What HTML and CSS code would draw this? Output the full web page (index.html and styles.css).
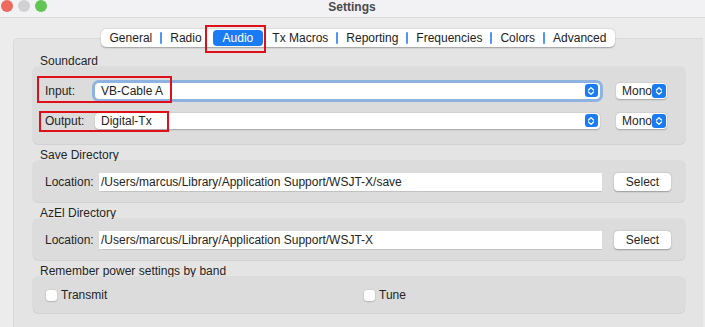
FILE: index.html
```html
<!DOCTYPE html>
<html lang="en">
<head>
  <meta charset="UTF-8">
  <meta name="viewport" content="width=device-width, initial-scale=1.0">
  <title>Settings</title>
  <link rel="stylesheet" href="styles.css">
</head>
<body>
  <div class="titlebar">
    <div class="lights">
      <span class="light light-close"></span>
      <span class="light light-min"></span>
      <span class="light light-max"></span>
    </div>
    <div class="title">Settings</div>
  </div>

  <div class="window">
    <nav class="tabs-row">
      <div class="tabs">
        <span class="tab">General</span>
        <span class="tab sep">Radio</span>
        <span class="tab active">Audio</span>
        <span class="tab">Tx Macros</span>
        <span class="tab sep">Reporting</span>
        <span class="tab sep">Frequencies</span>
        <span class="tab sep">Colors</span>
        <span class="tab sep">Advanced</span>
        <span class="mark mark-tab"></span>
      </div>
    </nav>

    <div class="pane">
      <!-- Soundcard -->
      <div class="group-title">Soundcard</div>
      <div class="group soundcard">
        <div class="row">
          <label class="row-label">Input:</label>
          <div class="combo focused">
            <span class="combo-text">VB-Cable A</span>
            <span class="stepper"><svg viewBox="0 0 12 12" width="12" height="12"><path d="M3.5 5 L6 2.6 L8.5 5 M3.5 7 L6 9.4 L8.5 7" fill="none" stroke="#fff" stroke-width="1.3" stroke-linecap="round" stroke-linejoin="round"/></svg></span>
          </div>
          <div class="combo small">
            <span class="combo-text">Mono</span>
            <span class="stepper"><svg viewBox="0 0 12 12" width="12" height="12"><path d="M3.5 5 L6 2.6 L8.5 5 M3.5 7 L6 9.4 L8.5 7" fill="none" stroke="#fff" stroke-width="1.3" stroke-linecap="round" stroke-linejoin="round"/></svg></span>
          </div>
        </div>
        <div class="row">
          <label class="row-label">Output:</label>
          <div class="combo">
            <span class="combo-text">Digital-Tx</span>
            <span class="stepper"><svg viewBox="0 0 12 12" width="12" height="12"><path d="M3.5 5 L6 2.6 L8.5 5 M3.5 7 L6 9.4 L8.5 7" fill="none" stroke="#fff" stroke-width="1.3" stroke-linecap="round" stroke-linejoin="round"/></svg></span>
          </div>
          <div class="combo small">
            <span class="combo-text">Mono</span>
            <span class="stepper"><svg viewBox="0 0 12 12" width="12" height="12"><path d="M3.5 5 L6 2.6 L8.5 5 M3.5 7 L6 9.4 L8.5 7" fill="none" stroke="#fff" stroke-width="1.3" stroke-linecap="round" stroke-linejoin="round"/></svg></span>
          </div>
        </div>
        <span class="mark mark-input"></span>
        <span class="mark mark-output"></span>
      </div>

      <!-- Save Directory -->
      <div class="group-title">Save Directory</div>
      <div class="group dir">
        <label class="dir-label">Location:</label>
        <div class="field">/Users/marcus/Library/Application Support/WSJT-X/save</div>
        <button class="btn">Select</button>
      </div>

      <!-- AzEl Directory -->
      <div class="group-title">AzEl Directory</div>
      <div class="group dir">
        <label class="dir-label">Location:</label>
        <div class="field">/Users/marcus/Library/Application Support/WSJT-X</div>
        <button class="btn">Select</button>
      </div>

      <!-- Power -->
      <div class="group-title">Remember power settings by band</div>
      <div class="group checks">
        <label class="check"><span class="box"></span>Transmit</label>
        <label class="check"><span class="box"></span>Tune</label>
      </div>
    </div>
  </div>
</body>
</html>
```

FILE: styles.css
```css
:root {
  --text-color: #242424;
  --window-bg: #ececec;
  --pane-bg: #e4e4e4;
  --group-bg: #dcdcdc;
  --blue: #1a7cf5;
  --mark-red: #e0101a;
}

* {
  margin: 0;
  padding: 0;
  box-sizing: border-box;
  font-family: 'Liberation Sans', Arial, sans-serif;
}

body {
  background-color: var(--window-bg);
  color: var(--text-color);
  font-size: 12px;
  width: 705px;
  height: 327px;
  overflow: hidden;
}

/* Title bar */
.titlebar {
  height: 18px;
  background-color: #f2f1f3;
  border-bottom: 1px solid #d9d9d9;
  display: flex;
  align-items: center;
  position: relative;
}

.lights {
  display: flex;
  gap: 5px;
  padding-left: 1px;
  margin-top: -6px;
}

.light {
  width: 12px;
  height: 12px;
  border-radius: 50%;
}

.light-close { background-color: #ed6a5e; }
.light-min { background-color: #d1d0d2; }
.light-max { background-color: #61c554; }

.title {
  flex: 1;
  text-align: center;
  font-weight: bold;
  font-size: 12px;
  line-height: 14px;
  color: #4a4a4a;
  margin-top: -4px;
  margin-right: 48px;
}

/* Window body */
.window {
  padding: 11px 2px 0 13px;
}

.tabs-row {
  display: flex;
  justify-content: center;
  margin-bottom: -9px;
  position: relative;
  z-index: 1;
}

.tabs {
  display: flex;
  height: 18px;
  background-color: #fff;
  border-radius: 5px;
  box-shadow: 0 0.5px 1.5px rgba(0, 0, 0, 0.3);
  position: relative;
}

.tab {
  padding: 0 9px;
  line-height: 18px;
  position: relative;
  color: #222;
}

.tab.sep::before {
  content: '';
  position: absolute;
  left: -1px;
  top: 3px;
  width: 2px;
  height: 12px;
  background-color: #4a97f5;
  border-radius: 1px;
}

.tab.active {
  background-color: var(--blue);
  color: #fff;
  border-radius: 4px;
  margin: 1px 2px;
  line-height: 16px;
  padding: 0 10px;
}

.tab:first-child { padding-left: 9px; padding-right: 9px; }
.tab:nth-child(4) { padding-left: 7px; }

/* Annotation boxes */
.mark {
  position: absolute;
  border: 2px solid var(--mark-red);
  pointer-events: none;
}

.mark-tab {
  left: 104px;
  top: -4px;
  width: 61px;
  height: 28px;
}

.mark-input {
  left: 4px;
  top: 9px;
  width: 135px;
  height: 27px;
}

.mark-output {
  left: 6px;
  top: 44px;
  width: 130px;
  height: 21px;
}

/* Tab pane */
.pane {
  background-color: var(--pane-bg);
  border-radius: 5px 0 0 0;
  border: 1px solid #dadada;
  border-right: none;
  border-bottom: none;
  min-height: 300px;
  padding: 17px 18px 0 19px;
}

.group-title {
  line-height: 10px;
  padding-left: 7px;
  margin-top: 6px;
  padding-bottom: 1px;
}

.group-title:first-child {
  margin-top: 0;
}

.group {
  background-color: var(--group-bg);
  border-radius: 5px;
  box-shadow: 0 0 0 0.5px rgba(0, 0, 0, 0.06), 0 1px 0 rgba(0, 0, 0, 0.05);
  position: relative;
}

/* Soundcard rows */
.soundcard {
  height: 77px;
  padding: 13px 18px 0 12px;
  display: flex;
  flex-direction: column;
  gap: 9px;
}

.row {
  display: flex;
  align-items: center;
  height: 21px;
}

.row-label {
  width: 50px;
}

.combo {
  flex: 1;
  height: 16px;
  background-color: #fff;
  border-radius: 4px;
  box-shadow: 0 0.5px 1.5px rgba(0, 0, 0, 0.25);
  display: flex;
  align-items: center;
  justify-content: space-between;
  padding: 0 2px 0 6px;
  margin-right: 16px;
}

.combo.focused {
  box-shadow: 0 0 0 3px rgba(80, 145, 230, 0.55);
}

.combo.small {
  flex: 0 0 51px;
  margin-right: 0;
  padding-right: 1px;
}

.combo-text {
  line-height: 16px;
}

.stepper {
  width: 13px;
  height: 13px;
  background-color: var(--blue);
  border-radius: 3px;
  display: flex;
  align-items: center;
  justify-content: center;
}

.combo.small .stepper {
  width: 14px;
  height: 14px;
}

/* Directory rows */
.dir {
  display: flex;
  align-items: center;
  height: 41px;
  padding: 0 14px 0 12px;
}

.dir-label {
  width: 54px;
}

.field {
  flex: 1;
  height: 18px;
  line-height: 18px;
  background-color: #fff;
  padding-left: 2px;
  margin-right: 12px;
  box-shadow: 0 0.5px 1px rgba(0, 0, 0, 0.12);
}

.btn {
  width: 57px;
  height: 18px;
  background-color: #fff;
  border: none;
  border-radius: 4px;
  box-shadow: 0 0.5px 1.5px rgba(0, 0, 0, 0.3);
  font-size: 12px;
  color: var(--text-color);
}

/* Checkboxes */
.checks {
  height: 36px;
  display: grid;
  grid-template-columns: 318px 1fr;
  align-items: center;
  padding: 0 13px;
}

.check {
  display: flex;
  align-items: center;
  gap: 4px;
}

.box {
  width: 11px;
  height: 11px;
  background-color: #fff;
  border-radius: 3px;
  box-shadow: 0 0.5px 1.5px rgba(0, 0, 0, 0.3);
}
```
